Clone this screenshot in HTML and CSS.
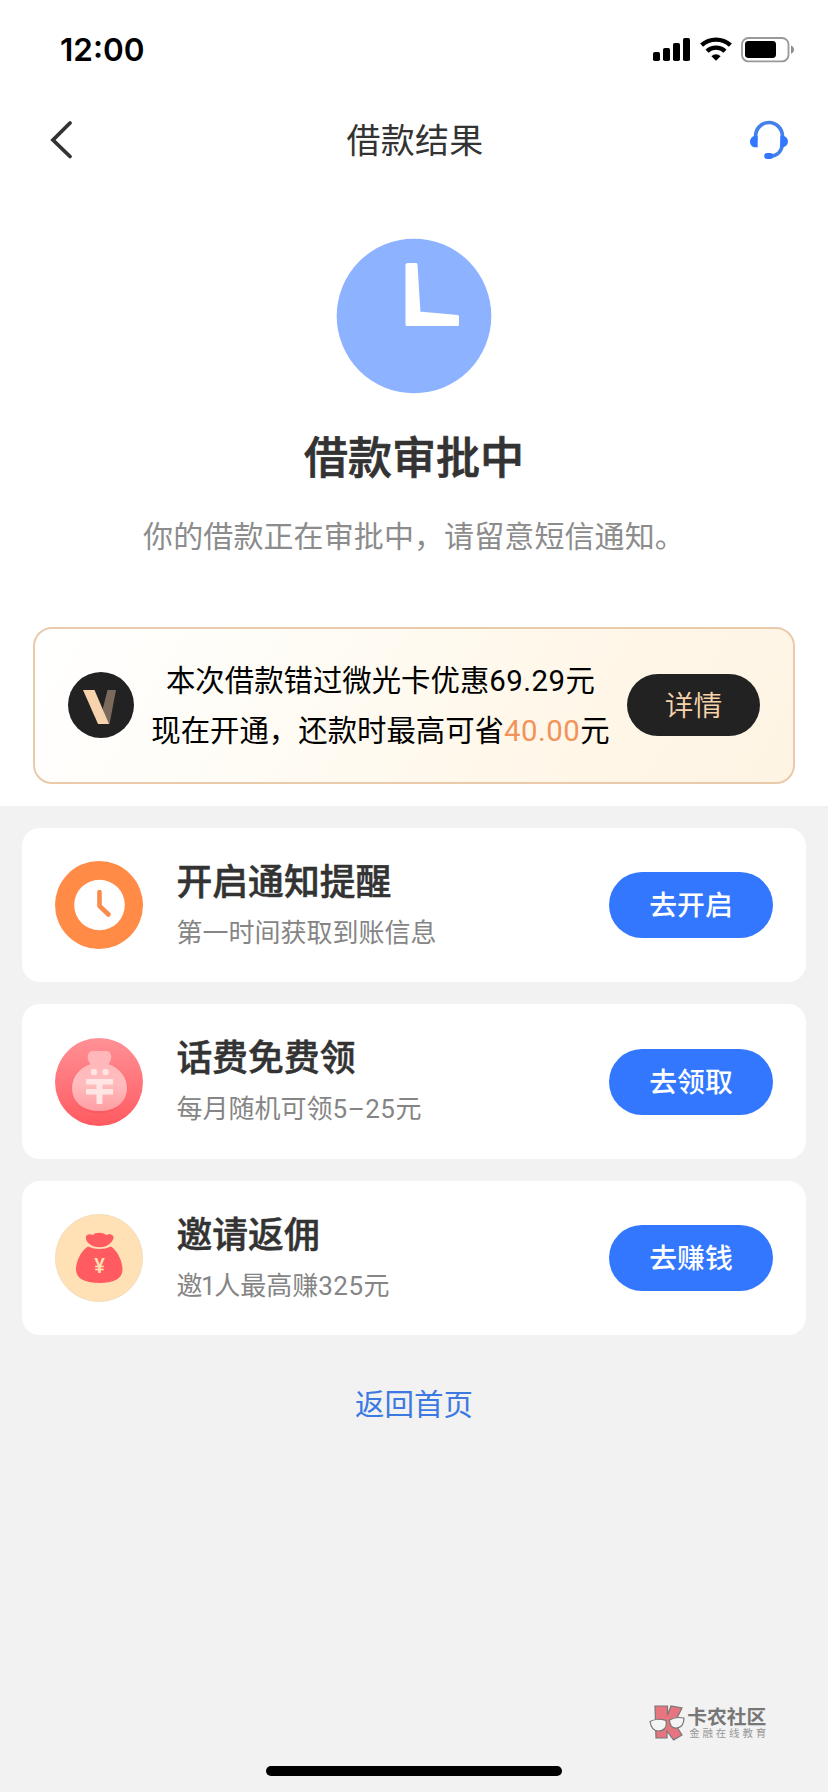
FILE: index.html
```html
<!DOCTYPE html>
<html lang="zh-CN">
<head>
<meta charset="utf-8">
<title>借款结果</title>
<link rel="stylesheet" href="styles.css">
</head>
<body>
<div class="screen">
  <section class="top">
    <div class="status">
      <span class="time">12:00</span>
      <svg class="status-icons" width="144" height="28" viewBox="0 0 144 28">
        <rect x="1" y="16" width="7" height="9" rx="1.8"/>
        <rect x="11" y="12" width="7" height="13" rx="1.8"/>
        <rect x="21" y="7" width="7" height="18" rx="1.8"/>
        <rect x="31" y="2" width="7" height="23" rx="1.8"/>
        <g fill="none" stroke="#000" stroke-width="4.4">
          <path d="M49.6 9.2a21.4 21.4 0 0 1 28.8 0"/>
          <path d="M55 15.2a13.2 13.2 0 0 1 18 0"/>
        </g>
        <path d="M59.4 20.2a6.6 6.6 0 0 1 9.2 0L64 24.8z"/>
        <rect x="90" y="2" width="46.5" height="23.4" rx="6.5" fill="#fff" stroke="#999" stroke-width="1.8"/>
        <rect x="93" y="5" width="31" height="17" rx="3.4"/>
        <path d="M139 9.6c4 1.6 4 6.6 0 8.2z" fill="#8d8d8d"/>
      </svg>
    </div>
    <header class="nav">
      <svg class="back" width="24" height="42" viewBox="0 0 24 42"><path d="M20 4L3 21L20 37.500" fill="none" stroke="#333" stroke-width="3.8" stroke-linecap="round"/></svg>
      <h1 class="nav-title">借款结果</h1>
      <svg class="service" width="40" height="40" viewBox="0 0 40 40">
        <path d="M6.500 21v-4.500a13.500 14 0 0 1 27 0v5.500c0 9-5 14-13 14.300" fill="none" stroke="#4380ea" stroke-width="3.700"/>
        <path d="M8.700 15.700H6C3 16.500 1 18.500 1 21.500c0 3.500 2.200 5.800 5.500 5.800h2.200zM31.400 15.700H34c3 .8 5 2.800 5 5.800s-2 5-5 5.800h-3z" fill="#3377ff"/>
        <rect x="15.200" y="33" width="9" height="6" rx="3" fill="#3377ff"/>
      </svg>
    </header>
    <div class="result">
      <svg class="clock" width="156" height="156" viewBox="0 0 156 156">
        <circle cx="78" cy="78" r="77.300" fill="#8db2ff"/>
        <path d="M71.500 26.500h8.500l3 48.500 38.500 3.500v8H71V27z" fill="#fff" stroke="#fff" stroke-width="3" stroke-linejoin="round"/>
      </svg>
      <h2 class="result-title">借款审批中</h2>
      <p class="result-desc">你的借款正在审批中，请留意短信通知。</p>
    </div>
    <div class="promo">
      <svg class="vip" width="66" height="66" viewBox="0 0 66 66">
        <circle cx="33" cy="33" r="33" fill="#222"/>
        <path d="M39.500 18H48l-6.500 34H36l-1-16z" fill="#7c6a5c"/>
        <path d="M15 18h11.500l14.500 34H30z" fill="#f6d2ad"/>
      </svg>
      <p class="promo-text">本次借款错过微光卡优惠<span class="num">69.29</span>元<br>现在开通，还款时最高可省<span class="num accent">40.00</span>元</p>
      <button class="detail">详情</button>
    </div>
  </section>
  <main class="tasks">
    <article class="task">
      <svg class="task-icon" width="88" height="88" viewBox="0 0 88 88">
        <circle cx="44" cy="44" r="44" fill="#ff8b47"/>
        <circle cx="44.500" cy="44" r="25.300" fill="#fff"/>
        <path d="M44.500 31v14l9 8.500" fill="none" stroke="#f98c4d" stroke-width="4.600" stroke-linecap="round" stroke-linejoin="round"/>
      </svg>
      <div class="task-body">
        <h3 class="task-title">开启通知提醒</h3>
        <p class="task-sub">第一时间获取到账信息</p>
      </div>
      <button class="go">去开启</button>
    </article>
    <article class="task">
      <svg class="task-icon" width="88" height="88" viewBox="0 0 88 88">
        <defs>
          <linearGradient id="coral" x1="0" y1="0" x2="0" y2="1"><stop offset="0" stop-color="#ff9196"/><stop offset="1" stop-color="#ff5a60"/></linearGradient>
          <linearGradient id="bag" x1="0" y1="0" x2="0" y2="1"><stop offset="0" stop-color="#ffb6b9"/><stop offset=".55" stop-color="#ffbcbe"/><stop offset="1" stop-color="#ff9ea2"/></linearGradient>
        </defs>
        <circle cx="44" cy="44" r="44" fill="url(#coral)"/>
        <ellipse cx="44.500" cy="50" rx="28" ry="25.500" fill="#f5535c" opacity=".45"/>
        <path d="M35.500 26C31 21 32 13 38 13h13c6 0 7 8 2.500 13C65 30 72 39 72 50c0 15-12 23-27.500 23S17 65 17 50c0-11 7-20 18.500-24z" fill="url(#bag)"/>
        <g fill="#ffe6e5"><rect x="36" y="31" width="6" height="6" rx="2"/><rect x="47.500" y="31" width="6" height="6" rx="2"/><rect x="31" y="41" width="27" height="5.500" rx="1"/><rect x="31" y="51" width="27" height="5.500" rx="1"/><rect x="41.500" y="42" width="6" height="24" rx="1"/></g>
      </svg>
      <div class="task-body">
        <h3 class="task-title">话费免费领</h3>
        <p class="task-sub">每月随机可领<span class="num">5–25</span>元</p>
      </div>
      <button class="go">去领取</button>
    </article>
    <article class="task">
      <svg class="task-icon" width="88" height="88" viewBox="0 0 88 88">
        <circle cx="44" cy="44" r="43.700" fill="#ffe1b5" stroke="#e9d5b5" stroke-width=".6"/>
        <path d="M36 31c-3-2-5-4-5.200-7-.2-3.500 3.500-4.500 7.200-3 2-3 10-3 13 0 3.500-1.500 8-.5 7.500 3-.5 3-3 5-5.500 7-4 3-13 3-17 0z" fill="#ff5b60"/>
        <path d="M33 32.500q11.500 5 23 0C63 37 67.500 48 67.500 55.500 67.500 65 58 69 44.500 69S21 65 21 55.500C21 48 25.500 37 33 32.500z" fill="#ff5b60"/>
        <text x="44.500" y="58.500" class="yen">¥</text>
      </svg>
      <div class="task-body">
        <h3 class="task-title">邀请返佣</h3>
        <p class="task-sub">邀<span class="num one">1</span>人最高赚<span class="num">325</span>元</p>
      </div>
      <button class="go">去赚钱</button>
    </article>
    <a class="home-link">返回首页</a>
  </main>
  <footer class="bottom">
    <div class="brand">
      <svg width="36" height="38" viewBox="0 0 36 38">
        <path d="M6 2h12.500v9L22 2l11 2-7.500 15L33 31l-8.500 5L18 27v7H7z" fill="#e67580" stroke="#777" stroke-width="1.200"/>
        <path d="M1 17.500c4-2.500 11-2.500 16-1 1.500 7-2.500 10.500-7.500 10.500S2 24 1 17.500zM20.500 16c4.500-2.500 9.500-3 14.500-2 0 6-3 9.500-7.500 10S20.500 21 20.500 16z" fill="#f4f4f4" stroke="#777" stroke-width="1.200"/>
      </svg>
      <div class="brand-text"><span class="brand-name">卡农社区</span><span class="brand-sub">金融在线教育</span></div>
    </div>
    <div class="home-bar"></div>
  </footer>
</div>
</body>
</html>
```
FILE: styles.css
```css
* { box-sizing: border-box; }
body {
  margin: 0;
  font-family: "Noto Sans CJK SC", sans-serif;
  color: #333;
}
h1, h2, h3, p { margin: 0; }
button {
  border: 0;
  padding: 0;
  font-family: inherit;
}
.screen {
  width: 828px;
  height: 1792px;
  display: flex;
  flex-direction: column;
  background: #f2f2f2;
}
.top {
  height: 806px;
  background: #fff;
}
.status {
  height: 96px;
  padding: 0 32px 0 60px;
  display: flex;
  align-items: center;
  justify-content: space-between;
}
.time {
  font: 600 31.5px/40px Inter, sans-serif;
  color: #000;
  margin-top: 4px;
}
.status-icons { margin-top: 4px; }
.nav {
  height: 88px;
  padding: 0 39px 0 50px;
  display: flex;
  align-items: center;
  justify-content: space-between;
}
.nav-title {
  font-size: 34px;
  font-weight: 400;
  line-height: 40px;
  letter-spacing: .2px;
  margin-left: 7px;
  margin-top: -3px;
}
.result {
  padding-top: 54px;
  display: flex;
  flex-direction: column;
  align-items: center;
}
.result-title {
  margin-top: 29px;
  font-size: 44px;
  font-weight: 500;
  line-height: 64px;
  -webkit-text-stroke: .7px #333;
}
.result-desc {
  margin-top: 25px;
  font-size: 30px;
  font-weight: 400;
  line-height: 44px;
  letter-spacing: .1px;
  color: #8c8c8c;
}
.promo {
  margin: 71px 33px 0;
  height: 157px;
  padding: 0 33px 1px;
  display: flex;
  align-items: center;
  justify-content: space-between;
  border: 2px solid #e9cbab;
  border-radius: 19px;
  background: linear-gradient(120deg, #fff 0%, #fffcf5 35%, #fff7e9 65%, #fef4e4 100%);
}
.promo-text {
  font-size: 29.4px;
  font-weight: 400;
  line-height: 50px;
  text-align: center;
  color: #000;
  margin-top: -5px;
  white-space: nowrap;
}
.num {
  font-family: Roboto, sans-serif;
  line-height: 1;
  letter-spacing: .5px;
}
.one { margin: 0 -2px 0 -1.5px; }
.accent { color: #f2935a; }
.detail {
  width: 133px;
  height: 62px;
  border-radius: 31px;
  background: #222;
  color: #f7d2ab;
  font-size: 28.8px;
  font-weight: 350;
  line-height: 58px;
  padding-bottom: 3px;
}
.tasks {
  padding: 22px 22px 0;
  display: flex;
  flex-direction: column;
  gap: 22.3px;
}
.task {
  height: 154.2px;
  padding: 0 33px;
  display: flex;
  align-items: center;
  border-radius: 18px;
  background: #fff;
}
.task-body {
  flex: 1;
  margin-left: 33.5px;
  margin-top: -1px;
}
.task-title {
  font-size: 35.8px;
  font-weight: 500;
  line-height: 51px;
  -webkit-text-stroke: .5px #333;
}
.task-sub {
  height: 51px;
  font-size: 26px;
  font-weight: 400;
  line-height: 51px;
  color: #858585;
}
.go {
  width: 164px;
  height: 66px;
  border-radius: 33px;
  background: #3377ff;
  color: #fff;
  font-size: 27.8px;
  font-weight: 500;
  line-height: 62px;
  padding-bottom: 4px;
}
.yen {
  font: 500 20px Roboto, sans-serif;
  fill: #ffe1b5;
  text-anchor: middle;
}
.home-link {
  align-self: center;
  margin-top: 23px;
  font-size: 29.5px;
  line-height: 44px;
  color: #3c79e2;
}
.bottom {
  margin-top: auto;
  display: flex;
  flex-direction: column;
  align-items: center;
  padding-bottom: 16px;
}
.brand {
  align-self: flex-end;
  margin-right: 59px;
  display: flex;
  align-items: center;
  gap: 2px;
}
.brand-text {
  display: flex;
  flex-direction: column;
}
.brand-name {
  font-size: 19.8px;
  font-weight: 700;
  line-height: 20px;
  color: #777;
}
.brand-sub {
  font-size: 10.5px;
  line-height: 14px;
  letter-spacing: 2.8px;
  padding-left: 2px;
  color: #999;
}
.home-bar {
  width: 296px;
  height: 10px;
  margin-top: 24px;
  border-radius: 5px;
  background: #000;
}
```
